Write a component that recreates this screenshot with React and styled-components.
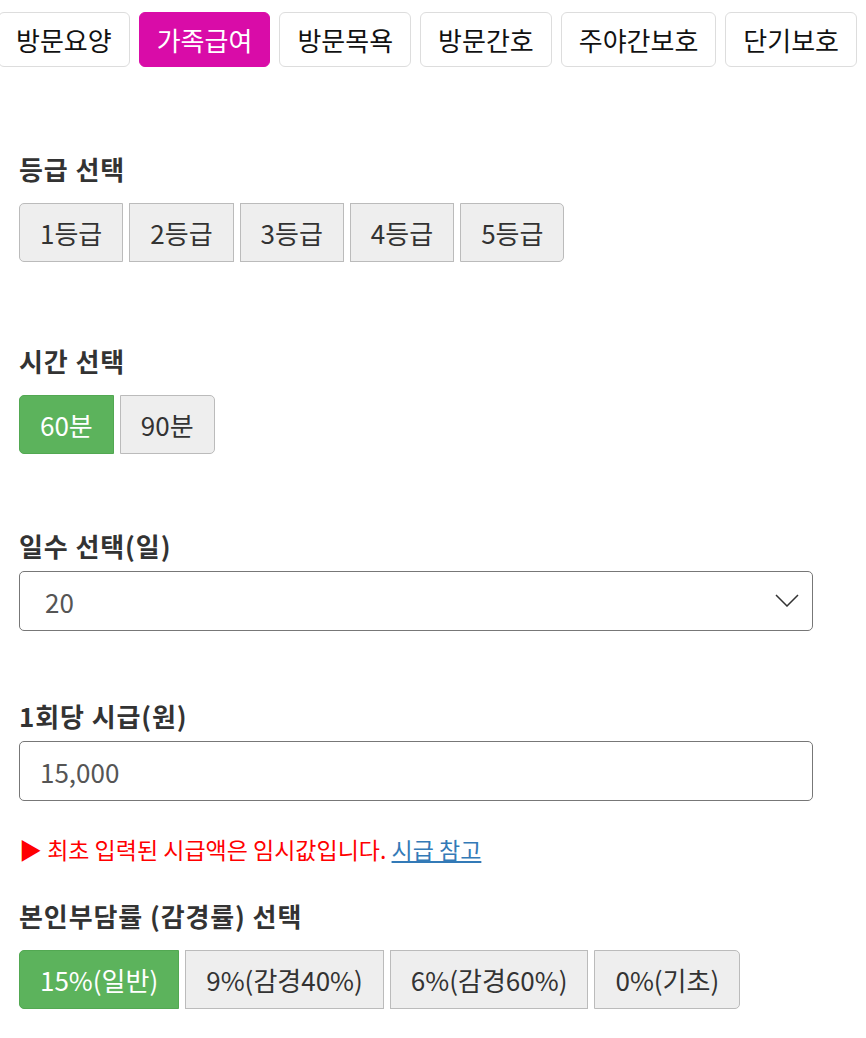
import styled, { createGlobalStyle } from 'styled-components';

const GlobalStyle = createGlobalStyle`
    body {
        margin: 0;
        background: #fff;
        font-family: "Noto Sans CJK KR", "Noto Sans", sans-serif;
        color: #333;
    }
`

const Page = styled.div`
    width: 866px;
    padding: 12px 0 30px;
    box-sizing: border-box;
`
const TabBar = styled.nav`
    display: flex;
    gap: 9px;
    margin-left: -2px;
`
const Tab = styled.button`
    height: 55px;
    padding: 0 17px;
    font-family: inherit;
    font-size: 26px;
    color: ${(p) => (p.$active ? '#fff' : '#111')};
    background: ${(p) => (p.$active ? '#d90ca8' : '#fff')};
    border: 1px solid ${(p) => (p.$active ? '#d90ca8' : '#ddd')};
    border-radius: 6px;
    white-space: nowrap;
`
const Content = styled.main`
    padding: 0 53px 0 19px;
`
const Section = styled.section`
    margin-top: ${(p) => p.$top}px;
`
const Heading = styled.h3`
    margin: 0;
    font-size: 26px;
    font-weight: 700;
    line-height: 34px;
    color: #333;
    letter-spacing: 0.9px;
`
const Group = styled.div`
    display: flex;
    gap: 6px;
    margin-top: 17px;
`
const Option = styled.button`
    height: 59px;
    padding: 0 20px;
    font-family: inherit;
    font-size: 26px;
    color: ${(p) => (p.$active ? '#fff' : '#333')};
    background: ${(p) => (p.$active ? '#5cb35c' : '#eee')};
    border: 1px solid ${(p) => (p.$active ? '#52a852' : '#bbb')};
    border-radius: 0;
    &:first-child {
        border-top-left-radius: 5px;
        border-bottom-left-radius: 5px;
    }
    &:last-child {
        border-top-right-radius: 5px;
        border-bottom-right-radius: 5px;
    }
`
const Field = styled.div`
    position: relative;
    margin-top: 8px;
    height: 60px;
    box-sizing: border-box;
    border: 1px solid #777;
    border-radius: 5px;
    display: flex;
    align-items: center;
    padding-left: ${(p) => p.$pad}px;
    font-size: 26px;
    color: #555;
`
const Chevron = styled.svg`
    position: absolute;
    right: 13px;
    top: 22px;
`
const Notice = styled.p`
    margin: 33px 0 0;
    font-size: 23px;
    line-height: 30px;
    color: #f00;
    & a {
        color: #337ab7;
        text-decoration: underline;
    }
`

const tabs = ['방문요양', '가족급여', '방문목욕', '방문간호', '주야간보호', '단기보호']
const grades = ['1등급', '2등급', '3등급', '4등급', '5등급']
const rates = ['15%(일반)', '9%(감경40%)', '6%(감경60%)', '0%(기초)']

function App() {
    return (
        <Page>
            <GlobalStyle />
            <TabBar>
                {tabs.map((t) => (
                    <Tab key={t} $active={t === '가족급여'}>{t}</Tab>
                ))}
            </TabBar>
            <Content>
                <Section $top={85}>
                    <Heading>등급 선택</Heading>
                    <Group>
                        {grades.map((g) => (
                            <Option key={g}>{g}</Option>
                        ))}
                    </Group>
                </Section>
                <Section $top={82}>
                    <Heading>시간 선택</Heading>
                    <Group>
                        <Option $active>60분</Option>
                        <Option>90분</Option>
                    </Group>
                </Section>
                <Section $top={75}>
                    <Heading>일수 선택(일)</Heading>
                    <Field $pad={25}>
                        20
                        <Chevron width="24" height="13" viewBox="0 0 24 13">
                            <path d="M1 1 L12 12 L23 1" fill="none" stroke="#333" strokeWidth="1.5" />
                        </Chevron>
                    </Field>
                </Section>
                <Section $top={68}>
                    <Heading>1회당 시급(원)</Heading>
                    <Field $pad={20}>15,000</Field>
                </Section>
                <Notice>
                    ▶ 최초 입력된 시급액은 임시값입니다. <a href="#">시급 참고</a>
                </Notice>
                <Section $top={35}>
                    <Heading>본인부담률 (감경률) 선택</Heading>
                    <Group>
                        {rates.map((r, i) => (
                            <Option key={r} $active={i === 0}>{r}</Option>
                        ))}
                    </Group>
                </Section>
            </Content>
        </Page>
    )
}

export default App;
